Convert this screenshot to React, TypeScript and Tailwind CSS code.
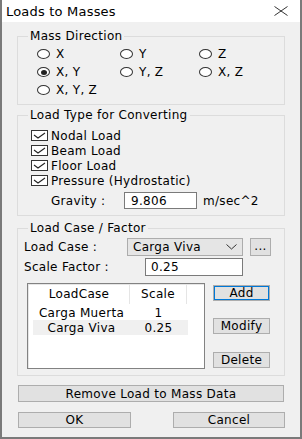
import React from "react";

const font = { fontFamily: '"DejaVu Sans", Verdana, sans-serif' };

function Radio({ label, checked }: { label: string; checked?: boolean }) {
  return (
    <div className="flex items-center h-[18px]">
      <span className="w-[13px] h-[10px] rounded-[50%] border border-[#333] bg-white flex items-center justify-center shrink-0">
        {checked && <span className="w-[6px] h-[5px] rounded-[50%] bg-[#222]" />}
      </span>
      <span className="ml-[6px]">{label}</span>
    </div>
  );
}

function Check({ label }: { label: string }) {
  return (
    <div className="flex items-center h-[15px]">
      <span className="w-[17px] h-[11px] border border-[#333] bg-white flex items-center justify-center shrink-0">
        <svg width="13" height="7" viewBox="0 0 13 7">
          <path d="M1 3 L5 6 L12 1" fill="none" stroke="#222" strokeWidth="1.1" />
        </svg>
      </span>
      <span className="ml-[3px]">{label}</span>
    </div>
  );
}

function Btn({ children, className = "" }: { children: React.ReactNode; className?: string }) {
  return (
    <div className={`bg-[#e1e1e1] border border-[#adadad] flex items-center justify-center ${className}`}>
      {children}
    </div>
  );
}

export default function App() {
  return (
    <div
      className="w-[302px] h-[439px] bg-[#f0f0f0] border-x-2 border-b-2 border-[#7a7a7a] flex flex-col text-[12px] tracking-[0.3px] text-black leading-none"
      style={font}
    >
      {/* Title bar */}
      <div className="h-[22px] bg-white flex items-center justify-between pl-[4px] pr-[12px] shrink-0">
        <span className="text-[13px] tracking-[0.2px]">Loads to Masses</span>
        <svg width="14" height="10" viewBox="0 0 14 10">
          <path d="M0.5 0.5 L13.5 9.5 M13.5 0.5 L0.5 9.5" stroke="#333" strokeWidth="1" />
        </svg>
      </div>

      <div className="px-[15px] flex flex-col">
        {/* Mass Direction */}
        <div className="relative mt-[14px] h-[69px] border border-[#dcdcdc]">
          <span className="absolute -top-[7px] left-[10px] px-[2px] bg-[#f0f0f0]">Mass Direction</span>
          <div className="grid grid-cols-[83px_79px_1fr] pl-[19px] pt-[8px]">
            <Radio label="X" />
            <Radio label="Y" />
            <Radio label="Z" />
            <Radio label="X, Y" checked />
            <Radio label="Y, Z" />
            <Radio label="X, Z" />
            <Radio label="X, Y, Z" />
          </div>
        </div>

        {/* Load Type */}
        <div className="relative mt-[10px] h-[101px] border border-[#dcdcdc]">
          <span className="absolute -top-[7px] left-[10px] px-[2px] bg-[#f0f0f0]">Load Type for Converting</span>
          <div className="flex flex-col pl-[13px] pt-[12px]">
            <Check label="Nodal Load" />
            <Check label="Beam Load" />
            <Check label="Floor Load" />
            <Check label="Pressure (Hydrostatic)" />
          </div>
          <div className="flex items-center mt-[4px] pl-[33px]">
            <span className="w-[73px]">Gravity :</span>
            <div className="w-[73px] h-[17px] bg-white border border-[#7a7a7a] flex items-center pl-[6px]">9.806</div>
            <span className="ml-[6px]">m/sec^2</span>
          </div>
        </div>

        {/* Load Case / Factor */}
        <div className="relative mt-[12px] h-[148px] border border-[#dcdcdc]">
          <span className="absolute -top-[7px] left-[10px] px-[2px] bg-[#f0f0f0]">Load Case / Factor</span>
          <div className="pl-[6px] pt-[9px] flex flex-col">
            <div className="flex items-center h-[18px]">
              <span className="w-[103px]">Load Case :</span>
              <div className="w-[116px] h-[18px] bg-[#e5e5e5] border border-[#acacac] flex items-center justify-between pl-[5px] pr-[5px]">
                <span>Carga Viva</span>
                <svg width="11" height="6" viewBox="0 0 11 6">
                  <path d="M0.5 0.5 L5.5 5 L10.5 0.5" fill="none" stroke="#333" strokeWidth="1" />
                </svg>
              </div>
              <Btn className="ml-[7px] w-[21px] h-[18px] bg-[#e1e1e1]">
                <span className="-mt-[3px]">...</span>
              </Btn>
            </div>
            <div className="flex items-center h-[18px] mt-[2px]">
              <span className="w-[121px]">Scale Factor :</span>
              <div className="w-[98px] h-[18px] bg-white border border-[#7a7a7a] flex items-center pl-[5px]">0.25</div>
            </div>
            <div className="flex mt-[7px]">
              <div className="ml-[3px] w-[178px] h-[86px] bg-white border border-[#828282] shadow-[inset_1px_1px_0_#e6e6e6]">
                <div className="flex h-[20px] items-center pl-[1px]">
                  <div className="w-[101px] h-full flex items-center justify-center border-r border-[#e5e5e5]">LoadCase</div>
                  <div className="w-[57px] h-full flex items-center justify-center border-r border-[#e5e5e5]">Scale</div>
                </div>
                <div className="flex h-[15px] items-center pl-[5px] mt-[1px]">
                  <div className="w-[97px] text-center">Carga Muerta</div>
                  <div className="w-[57px] text-center">1</div>
                </div>
                <div className="flex h-[15px] items-center ml-[5px] w-[155px] bg-[#f0f0f0]">
                  <div className="w-[97px] text-center">Carga Viva</div>
                  <div className="w-[57px] text-center">0.25</div>
                </div>
              </div>
              <div className="ml-[8px] flex flex-col w-[57px]">
                <Btn className="mt-[2px] h-[16px] border-[#0078d7] shadow-[inset_0_0_0_1px_#0078d7]">Add</Btn>
                <Btn className="mt-[17px] h-[16px]">Modify</Btn>
                <Btn className="mt-[18px] h-[16px]">Delete</Btn>
              </div>
            </div>
          </div>
        </div>

        <Btn className="mt-[9px] ml-[1px] w-[266px] h-[17px]">Remove Load to Mass Data</Btn>
        <div className="flex justify-between mt-[10px] ml-[1px] w-[267px]">
          <Btn className="w-[113px] h-[16px]">OK</Btn>
          <Btn className="w-[112px] h-[16px]">Cancel</Btn>
        </div>
      </div>
    </div>
  );
}
